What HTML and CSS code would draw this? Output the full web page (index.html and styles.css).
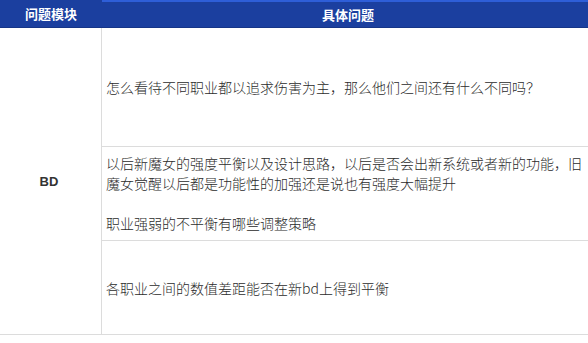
FILE: index.html
```html
<!DOCTYPE html>
<html lang="zh">
<head>
<meta charset="utf-8">
<link rel="stylesheet" href="styles.css">
</head>
<body>
<div class="sheet">
  <div class="head head-module">问题模块</div>
  <div class="head head-question">具体问题</div>
  <div class="module">BD</div>
  <div class="cell row-1">怎么看待不同职业都以追求伤害为主，那么他们之间还有什么不同吗？</div>
  <div class="cell row-2">以后新魔女的强度平衡以及设计思路，以后是否会出新系统或者新的功能，旧魔女觉醒以后都是功能性的加强还是说也有强度大幅提升<br><br>职业强弱的不平衡有哪些调整策略</div>
  <div class="cell row-3">各职业之间的数值差距能否在新bd上得到平衡</div>
</div>
</body>
</html>
```

FILE: styles.css
```css
html, body {
  margin: 0;
  padding: 0;
  overflow: hidden;
  background: #ffffff;
}

.sheet {
  display: grid;
  grid-template-columns: 102px 492px;
  grid-template-rows: 28px 119px 94px 94px;
  width: 594px;
  font-family: "Microsoft YaHei", "Noto Sans CJK SC", "Noto Sans", sans-serif;
  font-size: 14px;
  color: #2b2b2b;
}

.head {
  display: flex;
  align-items: center;
  justify-content: center;
  box-sizing: border-box;
  background: #1b3f9f;
  color: #ffffff;
  font-weight: bold;
  font-size: 13px;
  border-bottom: 1px solid #163587;
}

.head-question {
  border-top: 2px solid #2e5ed8;
}

.module {
  grid-column: 1;
  grid-row: 2 / span 3;
  display: flex;
  align-items: center;
  justify-content: center;
  box-sizing: border-box;
  border-right: 1px solid #dcdcdc;
  border-bottom: 1px solid #dcdcdc;
  font-family: "Liberation Sans", "Noto Sans CJK SC", sans-serif;
  font-weight: bold;
  font-size: 13px;
  color: #333333;
  padding-right: 3px;
}

.cell {
  grid-column: 2;
  display: flex;
  flex-direction: column;
  justify-content: center;
  box-sizing: border-box;
  padding: 0 8px 0 4px;
  border-bottom: 1px solid #dcdcdc;
  line-height: 20px;
  font-weight: 300;
}

.cell.row-2 {
  display: block;
  padding-top: 6px;
  padding-bottom: 7px;
}
```
